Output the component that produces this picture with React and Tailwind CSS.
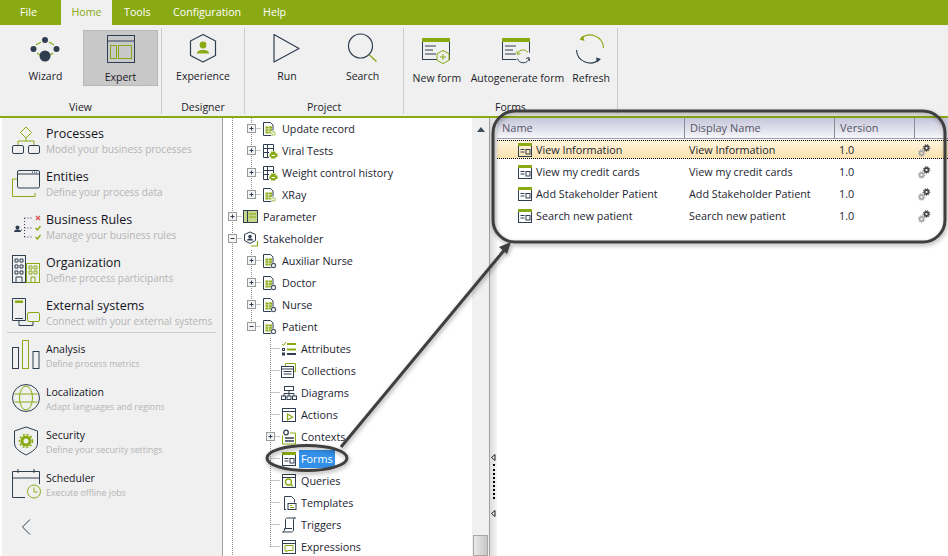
import React from 'react';

const navy = '#2f3e50';
const green = '#8aaa14';

const Ico = ({size = 36, children}) => (
    <svg width={size} height={size} viewBox={`0 0 ${size} ${size}`} fill="none" className="shrink-0">
        {children}
    </svg>
);

const FormBar = () => (
    <>
        <rect x="3.5" y="7.5" width="27" height="21" stroke={navy}/>
        <rect x="3" y="7" width="28" height="4" fill={green}/>
        <path d="M6 15h11M6 19h8M6 23h11" stroke={navy}/>
    </>
);

const ribbonIcons = {
    wizard: (
        <Ico>
            <path d="M8 14l5-3M26 14l-5-3M9 22l3 2M25 22l-3 2" stroke={green} strokeWidth="1.2"/>
            <circle cx="17" cy="9" r="3" fill={navy}/>
            <circle cx="5.5" cy="18" r="3" fill={navy}/>
            <circle cx="28.5" cy="18" r="3" fill={navy}/>
            <circle cx="17" cy="25" r="5.5" fill={navy}/>
        </Ico>
    ),
    expert: (
        <Ico>
            <rect x="4.5" y="3.5" width="27" height="27" stroke={navy}/>
            <path d="M4.5 9h27" stroke={navy}/>
            <rect x="7.5" y="13.5" width="6" height="13" stroke={green}/>
            <rect x="15.5" y="13.5" width="13" height="13" stroke={green}/>
        </Ico>
    ),
    experience: (
        <Ico>
            <path d="M18 3.5L30.5 10v14.5L18 31 5.5 24.5V10z" stroke={navy} strokeWidth="1.2" strokeLinejoin="round"/>
            <circle cx="18" cy="14" r="3.4" fill={green}/>
            <path d="M12 22.5c0-3 3-3 4.5-3.5h3c1.5.5 4.5.5 4.5 3.500z" fill={green}/>
        </Ico>
    ),
    run: (
        <Ico>
            <path d="M5 3.500L30 17.500 5 31z" stroke={navy} strokeWidth="1.2" strokeLinejoin="round"/>
        </Ico>
    ),
    search: (
        <Ico>
            <circle cx="15.500" cy="15" r="12" stroke={navy} strokeWidth="1.2"/>
            <path d="M24.500 24l7 6.500" stroke={green} strokeWidth="1.4"/>
        </Ico>
    ),
    newForm: (
        <Ico>
            <FormBar/>
            <path d="M24 19.500l6 3.200v6.600l-6 3.200-6-3.200v-6.600z" fill="#f0f0f0" stroke={green}/>
            <path d="M24 23v6M21 26h6" stroke={green}/>
        </Ico>
    ),
    autoForm: (
        <Ico>
            <FormBar/>
            <circle cx="24" cy="25" r="7.500" fill="#f0f0f0"/>
            <path d="M18.500 22.500a6 6 0 0 1 10.500-1" stroke={green}/>
            <path d="M30 27.500a6 6 0 0 1-11.500 0" stroke={navy}/>
            <path d="M18 20l.5 3.500 3-1" stroke={green}/>
            <path d="M30.500 30l-.5-3.500-3 1" stroke={navy}/>
        </Ico>
    ),
    refresh: (
        <Ico>
            <path d="M8 7.500a13.500 13.500 0 0 1 22.500 9.500" stroke={green} strokeWidth="1.1"/>
            <path d="M3.500 19a13.500 13.500 0 0 0 23 9" stroke={navy} strokeWidth="1.1"/>
            <path d="M10 4.500L6.500 8.500l5 1.500" fill={green}/>
            <path d="M24 31.500l4-3.500-5-1.500" fill={navy}/>
        </Ico>
    ),
};

const RibbonButton = ({icon, label, width, active, low}) => (
    <div className={`flex flex-col items-center h-[56px] pt-px box-border ${width} ${active ? 'bg-[#c8c8c8] border border-[#b8b8b8]' : ''}`}>
        {ribbonIcons[icon]}
        <span className={`leading-4 text-[10.5px] whitespace-nowrap text-[#1c1c28] ${low ? 'mt-[3px]' : 'mt-px'}`}>{label}</span>
    </div>
);

const RibbonGroup = ({label, width, pad, children}) => (
    <div className={`flex flex-col ${width} border-r border-[#cccccc] mt-[3px] h-[86px]`}>
        <div className={`flex mt-[2px] ${pad}`}>{children}</div>
        <div className="text-center text-[10.5px] leading-4 mt-[13px] text-[#1c1c28]">{label}</div>
    </div>
);

const sideIcons = {
    processes: (
        <>
            <path d="M15 1l5.500 5.500L15 12 9.500 6.500z" stroke={green}/>
            <path d="M15 12v3M7 19v-4h16v4" stroke={green}/>
            <rect x="1.500" y="19.500" width="11" height="8" rx="1.500" stroke={navy}/>
            <rect x="17.500" y="19.500" width="11" height="8" rx="1.500" stroke={navy}/>
        </>
    ),
    entities: (
        <>
            <path d="M6 10H1.500v17.500H24V24" stroke={green}/>
            <rect x="6.500" y="1.500" width="22" height="17.500" rx="1.500" fill="#f0f0f0" stroke={navy}/>
            <path d="M6.500 5h22" stroke={navy}/>
            <path d="M21 3.200h6" stroke={navy} strokeDasharray="1 1"/>
        </>
    ),
    rules: (
        <>
            <circle cx="6.500" cy="15.500" r="2" fill={navy}/>
            <path d="M3 20c0-2 2-2.500 3.500-2.500S10 18 10 20z" fill={navy}/>
            <path d="M13.500 6v20M13.500 6h9M13.500 16h8M13.500 25h8M10 18h3" stroke={navy} strokeDasharray="1 2"/>
            <path d="M25 4l4 4M29 4l-4 4" stroke="#d9534f" strokeWidth="1.300"/>
            <path d="M24.500 16l2 2 3-4M24.500 25l2 2 3-4" stroke={green} strokeWidth="1.300"/>
        </>
    ),
    org: (
        <>
            <rect x="1.500" y="0.500" width="13" height="27" stroke={navy}/>
            <path d="M4 4h3v3H4zM9 4h3v3H9zM4 10h3v3H4zM9 10h3v3H9zM4 16h3v3H4zM9 16h3v3H9zM5 27.500V22h6v5.500" stroke={navy}/>
            <rect x="15.500" y="8.500" width="13" height="19" stroke={green}/>
            <path d="M18 11h3v3h-3zM23 11h3v3h-3zM18 16h3v3h-3zM23 16h3v3h-3zM20 27.500V22h4v5.500" stroke={green}/>
        </>
    ),
    external: (
        <>
            <path d="M1.500.500h13v22h-13z" stroke={navy}/>
            <rect x="4" y="2.500" width="8" height="2.500" fill={green}/>
            <path d="M4 20.500h8" stroke={navy}/>
            <path d="M8 23v4.500h14V24" stroke={navy}/>
            <rect x="16.500" y="14.500" width="12" height="9" rx="1.500" fill="#f0f0f0" stroke={green}/>
        </>
    ),
    analysis: (
        <>
            <rect x="1.500" y="7.500" width="6" height="21" stroke={navy}/>
            <rect x="11.500" y="0.500" width="6" height="28" stroke={green}/>
            <rect x="22" y="11.500" width="6" height="17" stroke={navy}/>
        </>
    ),
    localization: (
        <>
            <circle cx="15" cy="15" r="13.500" stroke={navy}/>
            <ellipse cx="15" cy="15" rx="6.500" ry="12" stroke={green}/>
            <path d="M3.500 11h23M3.500 19h23" stroke={green}/>
        </>
    ),
    security: (
        <>
            <path d="M15 1l11.500 4v12c0 6-6 9-11.500 12C9.500 26 3.500 23 3.500 17V5z" stroke={navy}/>
            <circle cx="15" cy="15" r="4" stroke={green} strokeWidth="3"/>
            <circle cx="15" cy="15" r="6.500" stroke={green} strokeWidth="1.500" strokeDasharray="2 1.800"/>
        </>
    ),
    scheduler: (
        <>
            <path d="M14 28.500H1.500v-26h27V15" stroke={navy}/>
            <path d="M1.500 9h27M7 0v4M23 0v4" stroke={navy}/>
            <circle cx="23" cy="22.500" r="6.500" fill="#f0f0f0" stroke={green}/>
            <path d="M23 18.500v4.500h3.500" stroke={green}/>
        </>
    ),
};

const topItems = [
    {icon: 'processes', title: 'Processes', sub: 'Model your business processes'},
    {icon: 'entities', title: 'Entities', sub: 'Define your process data'},
    {icon: 'rules', title: 'Business Rules', sub: 'Manage your business rules'},
    {icon: 'org', title: 'Organization', sub: 'Define process participants'},
    {icon: 'external', title: 'External systems', sub: 'Connect with your external systems'},
];

const bottomItems = [
    {icon: 'analysis', title: 'Analysis', sub: 'Define process metrics'},
    {icon: 'localization', title: 'Localization', sub: 'Adapt languages and regions'},
    {icon: 'security', title: 'Security', sub: 'Define your security settings'},
    {icon: 'scheduler', title: 'Scheduler', sub: 'Execute offline jobs'},
];

const SideItem = ({icon, title, sub, small}) => (
    <div className="flex h-[43px]">
        <div className={`ml-[9px] ${small ? 'mt-[7px]' : 'mt-[8px]'}`}>
            <Ico size={30}>{sideIcons[icon]}</Ico>
        </div>
        <div className="ml-[5px] pt-[8px]">
            <div className={`whitespace-nowrap text-[#14141e] ${small ? 'text-[10.5px] leading-4' : 'text-[12.5px] leading-[15px]'}`}>{title}</div>
            <div className={`whitespace-nowrap text-[#b4b4b4] ${small ? 'text-[8.8px] leading-[14px]' : 'text-[10px] leading-4'}`}>{sub}</div>
        </div>
    </div>
);

const DocIcon = ({badge}) => (
    <Ico size={16}>
        <path d="M1.500 1.500h7l2.500 2.500v10.500H1.500z" stroke={navy}/>
        <path d="M3.500 5.500h6.500v7H3.500z" fill={green}/>
        <path d="M3.500 7.800h6.500M3.500 10.200h6.500M6.700 5.500v7" stroke="#ffffff" strokeWidth=".6"/>
        <circle cx="11.500" cy="12.500" r="2.900" fill="#ffffff"/>
        {badge === 'gear' ? (
            <circle cx="11.500" cy="12.500" r="1.700" stroke={green} strokeWidth="1.200" strokeDasharray="1 .6"/>
        ) : (
            <circle cx="11.500" cy="12.500" r="2.100" fill="#ffffff" stroke="#4a5a6a" strokeWidth="1.100"/>
        )}
    </Ico>
);

const FormIcon = () => (
    <Ico size={16}>
        <rect x="1.500" y="1.500" width="13" height="13" stroke={navy}/>
        <rect x="1" y="1" width="14" height="3" fill={green}/>
        <path d="M3.500 7.500h4M3.500 10h4" stroke={navy}/>
        <rect x="9" y="7.500" width="4" height="4.500" stroke={navy}/>
    </Ico>
);

const treeIcons = {
    gear: <DocIcon badge="gear"/>,
    person: <DocIcon badge="person"/>,
    table: (
        <Ico size={16}>
            <path d="M1.500 1.500h10v13h-10zM1.500 5.500h10M1.500 9.500h10M5.500 1.500v13" stroke={navy}/>
            <rect x="7" y="8" width="8.500" height="7.500" fill="#ffffff"/>
            <path d="M9 8.500h4.500v2h2v3.500h-2v1.500H9V14H7.500v-3.500H9z" fill={green}/>
            <path d="M9.500 12.500h3.500" stroke="#ffffff"/>
        </Ico>
    ),
    parameter: (
        <Ico size={16}>
            <rect x=".5" y="1.500" width="14" height="12" fill="#c5d58a" stroke={navy}/>
            <path d="M4.500 1.500v12" stroke={navy}/>
            <path d="M6 5h7M6 8h7" stroke={green}/>
        </Ico>
    ),
    stakeholder: (
        <Ico size={16}>
            <path d="M7 1l5.500 2.500v6L7 12.500 1.500 9.500v-6z" stroke={navy}/>
            <circle cx="7" cy="5.500" r="1.700" fill={navy}/>
            <path d="M4 9.500c0-1.500 1.500-2 3-2s3 .5 3 2z" fill={navy}/>
            <path d="M14.500 10v5H8" stroke={green} strokeWidth="1.200"/>
        </Ico>
    ),
    attributes: (
        <Ico size={16}>
            <path d="M1 3l1.500 1.500L5 1" stroke={green}/>
            <rect x="1.500" y="7.500" width="2" height="2" stroke={navy}/>
            <rect x="1.500" y="12" width="2" height="2" stroke={navy}/>
            <path d="M6 3h9" stroke={green} strokeWidth="2"/>
            <path d="M6 8.500h9" stroke={green} strokeWidth="2"/>
            <path d="M6 13h9" stroke={navy} strokeWidth="2"/>
        </Ico>
    ),
    collections: (
        <Ico size={16}>
            <path d="M4.500 3V.5h10v8H12.500" stroke={green}/>
            <rect x=".5" y="3.500" width="12" height="11" fill="#ffffff" stroke={navy}/>
            <path d="M.5 6h12M2.500 8.500h8M2.500 11h8" stroke={navy}/>
        </Ico>
    ),
    diagrams: (
        <Ico size={16}>
            <rect x="3.500" y="1.500" width="9" height="4" stroke={navy}/>
            <path d="M8 5.500v3M3 11V8.500h10V11M8 8.500V11" stroke={navy}/>
            <rect x=".5" y="11" width="4" height="3.500" stroke={navy}/>
            <rect x="6" y="11" width="4" height="3.500" stroke={navy}/>
            <rect x="11.500" y="11" width="4" height="3.500" stroke={navy}/>
        </Ico>
    ),
    actions: (
        <Ico size={16}>
            <rect x="1.500" y="1.500" width="13" height="13" stroke={navy}/>
            <path d="M1.500 4.500h13" stroke={navy}/>
            <path d="M6.500 7l5 3-5 3z" stroke={green} strokeWidth="1.200"/>
        </Ico>
    ),
    contexts: (
        <Ico size={16}>
            <path d="M1.500 6.500v8.500h13V4H9" stroke={green}/>
            <circle cx="5" cy="3.500" r="2.300" stroke={navy} strokeWidth="1.300"/>
            <path d="M4 9h9M4 12h9" stroke={navy} strokeWidth="1.300"/>
        </Ico>
    ),
    forms: <FormIcon/>,
    queries: (
        <Ico size={16}>
            <rect x="1.500" y="1.500" width="13" height="13" stroke={navy}/>
            <path d="M1.500 4.500h13" stroke={navy}/>
            <circle cx="7.500" cy="9" r="3" stroke={green} strokeWidth="1.300"/>
            <path d="M10 11.500l2 2" stroke={green} strokeWidth="1.300"/>
        </Ico>
    ),
    templates: (
        <Ico size={16}>
            <path d="M3.500 14.500v-13h7l3 3v3" stroke={navy}/>
            <path d="M3 14.500h2" stroke={navy}/>
            <rect x="7" y="8.500" width="8" height="6" stroke={navy}/>
            <path d="M9 10.500h2M9 12.500h4" stroke={green}/>
        </Ico>
    ),
    triggers: (
        <Ico size={16}>
            <path d="M4.500 11.500v-9c0-1 1-1.500 2-1.500h8M14.500 1c-1.500 0-2 1-2 2v10c0 1-1 2-2 2H1.500c1 0 2-1 2-2v-1.500h7.500" stroke={navy}/>
        </Ico>
    ),
    expressions: (
        <Ico size={16}>
            <rect x="1.500" y="1.500" width="13" height="13" stroke={navy}/>
            <path d="M1.500 4.500h13" stroke={navy}/>
            <path d="M4 6.500h8v5H7l-2 1.500v-1.500H4z" stroke={green}/>
        </Ico>
    ),
};

const treeRows = [
    {level: 2, label: 'Update record', icon: 'gear', exp: '+'},
    {level: 2, label: 'Viral Tests', icon: 'table', exp: '+'},
    {level: 2, label: 'Weight control history', icon: 'table', exp: '+'},
    {level: 2, label: 'XRay', icon: 'gear', exp: '+', last: true},
    {level: 1, label: 'Parameter', icon: 'parameter', exp: '+'},
    {level: 1, label: 'Stakeholder', icon: 'stakeholder', exp: '-'},
    {level: 2, label: 'Auxiliar Nurse', icon: 'person', exp: '+'},
    {level: 2, label: 'Doctor', icon: 'person', exp: '+'},
    {level: 2, label: 'Nurse', icon: 'person', exp: '+'},
    {level: 2, label: 'Patient', icon: 'person', exp: '-', last: true},
    {level: 3, label: 'Attributes', icon: 'attributes'},
    {level: 3, label: 'Collections', icon: 'collections'},
    {level: 3, label: 'Diagrams', icon: 'diagrams'},
    {level: 3, label: 'Actions', icon: 'actions'},
    {level: 3, label: 'Contexts', icon: 'contexts', exp: '+'},
    {level: 3, label: 'Forms', icon: 'forms', selected: true},
    {level: 3, label: 'Queries', icon: 'queries'},
    {level: 3, label: 'Templates', icon: 'templates'},
    {level: 3, label: 'Triggers', icon: 'triggers'},
    {level: 3, label: 'Expressions', icon: 'expressions', last: true},
];

const dots = {stroke: '#8c8c8c', strokeDasharray: '1 1'};

// one 19px wide column of the tree: guide line, branch and optional +/- box
const TreeCol = ({line, branch, last, exp}) => (
    <svg width="19" height="22" viewBox="0 0 19 22" fill="none" className="shrink-0">
        {line && <path d={`M9.500 0V${last ? 11 : 22}`} {...dots}/>}
        {branch && <path d="M9.500 10.500H19" {...dots}/>}
        {exp && (
            <>
                <rect x="5.500" y="6.500" width="8" height="8" fill="#f4f4f4" stroke="#9a9a9a"/>
                <path d="M7.500 10.500h4" stroke={navy}/>
                {exp === '+' && <path d="M9.500 8.500v4" stroke={navy}/>}
            </>
        )}
    </svg>
);

const TreeRow = ({level, label, icon, exp, last, selected}) => (
    <div className="flex items-center h-[22px]">
        {level === 1 ? <TreeCol line branch exp={exp}/> : <TreeCol line/>}
        {level === 2 && <TreeCol line branch last={last} exp={exp}/>}
        {level === 3 && <div className="w-[19px] shrink-0"/>}
        {level === 3 && <TreeCol line branch last={last} exp={exp}/>}
        <div className="w-[19px] shrink-0 pl-px">{treeIcons[icon]}</div>
        <span className={`px-[2px] text-[10.8px] leading-[18px] whitespace-nowrap ${selected ? 'bg-[#3390e8] text-white' : 'text-[#1c2430]'}`}>{label}</span>
    </div>
);

const Gears = () => (
    <Ico size={14}>
        <circle cx="3.500" cy="10" r="2" stroke="#a8a8a8" strokeWidth="1.800"/>
        <circle cx="3.500" cy="10" r="3.400" stroke="#a8a8a8" strokeWidth="1" strokeDasharray="1.300 1"/>
        <circle cx="8.500" cy="5" r="2" fill="#ffffff" stroke="#444444" strokeWidth="1.800"/>
        <circle cx="8.500" cy="5" r="3.400" stroke="#444444" strokeWidth="1" strokeDasharray="1.300 1"/>
    </Ico>
);

const forms = ['View Information', 'View my credit cards', 'Add Stakeholder Patient', 'Search new patient'];

const App = () => {
    return (
        <div className="relative w-[948px] h-[556px] overflow-hidden flex flex-col bg-white font-['Open_Sans',sans-serif]">
            <div className="flex h-[25px] bg-[#8aaa14] text-[10.7px] text-white shrink-0">
                <div className="flex items-center ml-[20px] w-[41px]">File</div>
                <div className="flex items-center justify-center w-[51px] bg-[#f0f0f0] text-[#8aaa14]">Home</div>
                <div className="flex items-center ml-[12px] w-[49px]">Tools</div>
                <div className="flex items-center w-[90px]">Configuration</div>
                <div className="flex items-center">Help</div>
            </div>

            <div className="flex h-[93px] shrink-0 bg-[#f0f0f0] border-b-2 border-[#8aaa14]">
                <RibbonGroup label="View" width="w-[162px]" pad="pl-[8px]">
                    <RibbonButton icon="wizard" label="Wizard" width="w-[75px]"/>
                    <RibbonButton icon="expert" label="Expert" width="w-[75px]" active/>
                </RibbonGroup>
                <RibbonGroup label="Designer" width="w-[83px]" pad="justify-center">
                    <RibbonButton icon="experience" label="Experience" width="w-[75px]"/>
                </RibbonGroup>
                <RibbonGroup label="Project" width="w-[159px]" pad="pl-[4px]">
                    <RibbonButton icon="run" label="Run" width="w-[76px]"/>
                    <RibbonButton icon="search" label="Search" width="w-[75px]"/>
                </RibbonGroup>
                <RibbonGroup label="Forms" width="w-[214px]" pad="">
                    <RibbonButton icon="newForm" label="New form" width="w-[66px]" low/>
                    <RibbonButton icon="autoForm" label="Autogenerate form" width="w-[96px]" low/>
                    <RibbonButton icon="refresh" label="Refresh" width="w-[52px]" low/>
                </RibbonGroup>
            </div>

            <div className="flex flex-1 min-h-0">
                <div className="w-[222px] shrink-0 bg-[#f0f0f0] border-l-2 border-white">
                    {topItems.map((item) => <SideItem key={item.title} {...item}/>)}
                    <div className="h-px -mt-px ml-[5px] mr-[6px] bg-[#cccccc]"/>
                    {bottomItems.map((item) => <SideItem key={item.title} {...item} small/>)}
                    <svg width="10" height="16" viewBox="0 0 10 16" fill="none" className="ml-[19px] mt-[14px]">
                        <path d="M9 .5L1.500 8 9 15.500" stroke={navy}/>
                    </svg>
                </div>

                <div className="flex w-[268px] shrink-0 border-x border-[#a0a0a0]">
                    <div className="flex-1 min-w-0 overflow-hidden">
                        {treeRows.map((row) => <TreeRow key={row.label} {...row}/>)}
                    </div>
                    <div className="flex flex-col justify-between items-center w-[17px] bg-[#f0f0f0]">
                        <div className="mt-[9px] w-0 h-0 border-x-[4px] border-x-transparent border-b-[5px] border-b-[#3c4c5c]"/>
                        <div className="w-[15px] h-[21px] border border-[#a8a8a8] bg-linear-to-r from-[#e8e8e8] to-[#c8c8c8]"/>
                    </div>
                </div>

                <div className="flex flex-col items-center justify-end w-[7px] shrink-0 pb-[39px] bg-linear-to-r from-[#dcdcdc] to-[#f4f4f4]">
                    <svg width="5" height="7" viewBox="0 0 5 7" fill="none"><path d="M4 .5L.5 3.500 4 6.500z" stroke="#222222"/></svg>
                    <div className="h-[35px] my-[3px] border-l-2 border-dotted border-black"/>
                    <svg width="5" height="7" viewBox="0 0 5 7" fill="none" className="mt-[8px]"><path d="M4 .5L.5 3.500 4 6.500z" stroke="#222222"/></svg>
                </div>

                <div className="flex-1 min-w-0">
                    <div className="flex h-[21px] text-[11px] text-[#555566] bg-linear-to-b from-[#c6c6da] to-[#f6f6fa] border-b border-[#9a9aa8]">
                        <div className="w-[188px] pl-[5px] pt-[2px] border-r border-[#8c8c98]">Name</div>
                        <div className="w-[150px] pl-[5px] pt-[2px] border-r border-[#8c8c98]">Display Name</div>
                        <div className="w-[80px] pl-[5px] pt-[2px] border-r border-[#8c8c98]">Version</div>
                    </div>
                    {forms.map((name, i) => (
                        <div key={name} className="h-[22px] pt-px text-[10.8px] text-[#1c2430]">
                            <div className={`flex items-center h-[19px] ${i === 0 ? 'border-y border-dotted border-black bg-linear-to-b from-[#fff4dc] to-[#fbe3ae]' : ''}`}>
                                <div className="w-[20px] shrink-0"/>
                                <FormIcon/>
                                <span className="w-[156px] shrink-0 pl-[3px] pt-px whitespace-nowrap">{name}</span>
                                <span className="w-[150px] shrink-0 pt-px whitespace-nowrap">{name}</span>
                                <span className="w-[79px] shrink-0 pt-px">1.0</span>
                                <Gears/>
                            </div>
                        </div>
                    ))}
                </div>
            </div>

            <svg width="948" height="556" viewBox="0 0 948 556" fill="none" className="absolute inset-0 pointer-events-none drop-shadow-[1px_2px_2px_rgba(0,0,0,0.35)]">
                <rect x="493" y="111" width="452" height="131" rx="22" stroke="#3f3f3f" strokeWidth="3"/>
                <ellipse cx="307" cy="458" rx="40" ry="12.500" stroke="#3f3f3f" strokeWidth="3"/>
                <path d="M341 447L506 248" stroke="#3f3f3f" strokeWidth="3"/>
                <path d="M511 242l-12 5 8 7z" fill="#3f3f3f"/>
            </svg>
        </div>
    );
};

export default App;
